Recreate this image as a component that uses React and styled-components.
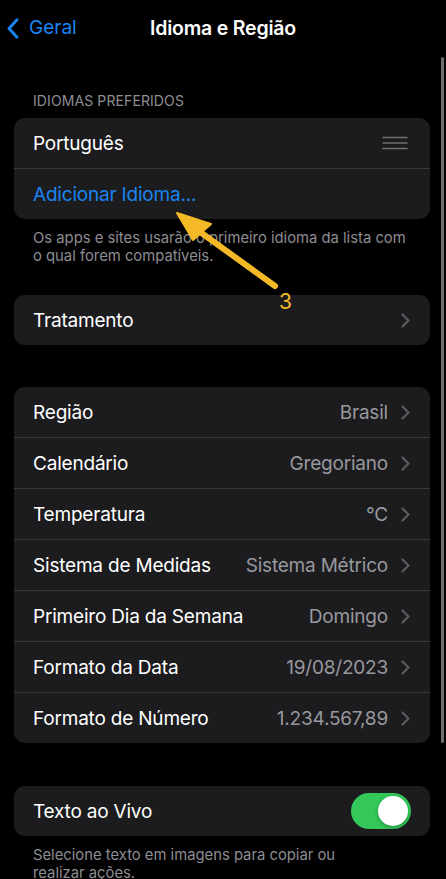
import styled, { createGlobalStyle } from 'styled-components';

const GlobalStyle = createGlobalStyle`
  html, body {
    margin: 0;
    padding: 0;
    background: #000;
  }
  body {
    font-family: Inter, "Noto Sans", "Liberation Sans", sans-serif;
    -webkit-font-smoothing: antialiased;
  }
`;

const Screen = styled.div`
  position: relative;
  width: 446px;
  height: 879px;
  overflow: hidden;
  background: #000;
  color: #fff;
`;

const NavBar = styled.div`
  position: relative;
  height: 56px;
  display: flex;
  align-items: center;
  justify-content: center;
`;

const BackButton = styled.div`
  position: absolute;
  left: 7px;
  top: 17px;
  display: flex;
  align-items: center;
  gap: 10px;
  color: #1a84f0;
  font-size: 19px;
  line-height: 22px;
`;

const Title = styled.div`
  font-size: 19.5px;
  font-weight: 600;
  letter-spacing: -0.2px;
`;

const Content = styled.div`
  padding: 0 16px 0 14px;
`;

const SectionHeader = styled.div`
  margin-top: 36px;
  padding: 0 19px 8px;
  font-size: 14px;
  line-height: 18px;
  color: #8d8d93;
  letter-spacing: 0.1px;
`;

const Card = styled.div`
  background: #1c1c1e;
  border-radius: 11px;
  overflow: hidden;
  margin-top: ${(p) => p.$top || 0}px;
`;

const Row = styled.div`
  height: 50px;
  display: flex;
  align-items: center;
  padding: 0 20px 0 19px;
  font-size: 19px;
  letter-spacing: -0.2px;
  color: ${(p) => (p.$link ? '#1a84f0' : '#fff')};
  & + & {
    border-top: 1px solid #38383a;
  }
`;

const Label = styled.span`
  flex: 1;
`;

const Value = styled.span`
  color: #98989f;
  margin-right: 13px;
`;

const Footer = styled.div`
  padding: 10px 19px 0;
  font-size: 14.8px;
  line-height: 18px;
  color: #8d8d93;
`;

const Toggle = styled.div`
  width: 60px;
  height: 36px;
  border-radius: 18px;
  background: #34c759;
  position: relative;
  margin-right: -1px;
  &::after {
    content: '';
    position: absolute;
    right: 3px;
    top: 3px;
    width: 30px;
    height: 30px;
    border-radius: 50%;
    background: #fff;
    box-shadow: 0 2px 4px rgba(0, 0, 0, 0.25);
  }
`;

const ScrollIndicator = styled.div`
  position: absolute;
  right: 2px;
  top: 57px;
  width: 3px;
  height: 686px;
  border-radius: 2px;
  background: #6e6e70;
`;

const Annotation = styled.svg`
  position: absolute;
  left: 0;
  top: 0;
  pointer-events: none;
`;

const Chevron = () => (
  <svg width="9" height="15" viewBox="0 0 9 15">
    <path d="M1.5 1.5 L7.5 7.5 L1.5 13.5" fill="none" stroke="#5c5c60" strokeWidth="2.2" strokeLinecap="round" strokeLinejoin="round" />
  </svg>
);

const BackChevron = () => (
  <svg width="12" height="21" viewBox="0 0 12 21">
    <path d="M10 1.8 L2 10.5 L10 19.2" fill="none" stroke="#1a84f0" strokeWidth="3" strokeLinecap="round" strokeLinejoin="round" />
  </svg>
);

const DragHandle = () => (
  <svg width="26" height="14" viewBox="0 0 26 14" style={{ marginRight: 2 }}>
    <g stroke="#6f6f73" strokeWidth="1.6" strokeLinecap="round">
      <line x1="1" y1="1.5" x2="25" y2="1.5" />
      <line x1="1" y1="7" x2="25" y2="7" />
      <line x1="1" y1="12.5" x2="25" y2="12.5" />
    </g>
  </svg>
);

const regionRows = [
  ['Região', 'Brasil'],
  ['Calendário', 'Gregoriano'],
  ['Temperatura', '°C'],
  ['Sistema de Medidas', 'Sistema Métrico'],
  ['Primeiro Dia da Semana', 'Domingo'],
  ['Formato da Data', '19/08/2023'],
  ['Formato de Número', '1.234.567,89'],
];

function App() {
  return (
    <>
      <GlobalStyle />
      <Screen>
        <NavBar>
          <BackButton>
            <BackChevron />
            Geral
          </BackButton>
          <Title>Idioma e Região</Title>
        </NavBar>
        <Content>
          <SectionHeader>IDIOMAS PREFERIDOS</SectionHeader>
          <Card>
            <Row>
              <Label>Português</Label>
              <DragHandle />
            </Row>
            <Row $link>
              <Label>Adicionar Idioma...</Label>
            </Row>
          </Card>
          <Footer>
            Os apps e sites usarão o primeiro idioma da lista com
            <br />o qual forem compatíveis.
          </Footer>
          <Card $top={30}>
            <Row>
              <Label>Tratamento</Label>
              <Chevron />
            </Row>
          </Card>
          <Card $top={42}>
            {regionRows.map(([label, value]) => (
              <Row key={label}>
                <Label>{label}</Label>
                <Value>{value}</Value>
                <Chevron />
              </Row>
            ))}
          </Card>
          <Card $top={43}>
            <Row>
              <Label>Texto ao Vivo</Label>
              <Toggle />
            </Row>
          </Card>
          <Footer>
            Selecione texto em imagens para copiar ou
            <br />realizar ações.
          </Footer>
        </Content>
        <ScrollIndicator />
        <Annotation width="446" height="879" viewBox="0 0 446 879">
          <line x1="275" y1="286" x2="196" y2="229" stroke="#f5b927" strokeWidth="6" strokeLinecap="round" />
          <polygon points="177,213 211,224 193,240" fill="#f5b927" stroke="#f5b927" strokeWidth="2" strokeLinejoin="round" />
          <text x="279" y="309" fill="#f5b927" fontSize="21" fontFamily="Inter, 'Liberation Sans', sans-serif">3</text>
        </Annotation>
      </Screen>
    </>
  );
}

export default App;
